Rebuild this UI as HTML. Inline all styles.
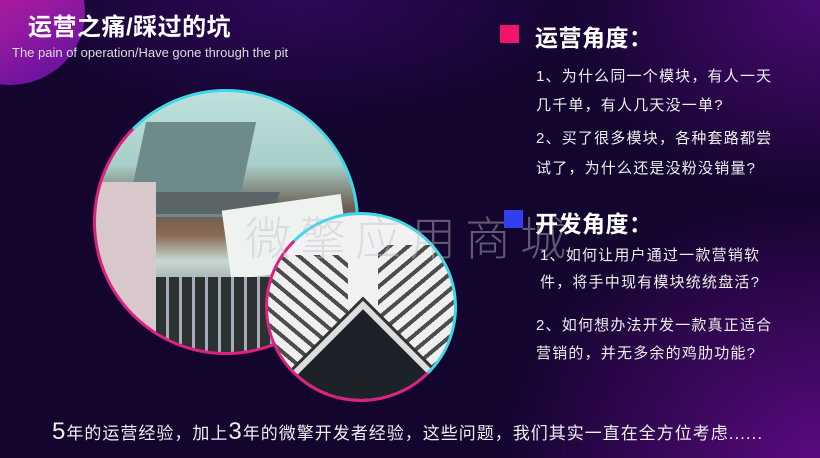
<!DOCTYPE html>
<html><head><meta charset="utf-8"><style>
*{margin:0;padding:0;box-sizing:border-box}
body{width:820px;height:458px;overflow:hidden;position:relative;font-family:"Liberation Sans","Noto Sans CJK SC",sans-serif;color:#fff;
background:radial-gradient(ellipse 260px 200px at 820px 0,#4a0a72 0%,rgba(74,10,114,0) 100%),radial-gradient(ellipse 320px 260px at 820px 458px,#5a0a80 0%,rgba(90,10,128,0) 100%),radial-gradient(ellipse 300px 120px at 300px 0,#2e0858 0%,rgba(46,8,88,0) 100%),#14052f;}
.a{position:absolute;white-space:nowrap}
.blob{position:absolute;left:-65px;top:-60px;width:150px;height:145px;border-radius:50%;background:linear-gradient(150deg,#e0187e 0%,#9a1aa0 55%,#5a10a0 100%)}
.c1{position:absolute;left:93px;top:89px;width:266px;height:266px;border-radius:50%;border:3px solid;border-color:#40d8e8 #40d8e8 #e0207e #e0207e;overflow:hidden;
background:linear-gradient(180deg,#bfe0dc 0%,#a8cfc9 28%,#6b5a50 45%,#8a6a55 55%,#c8d8d4 65%,#9aa8a8 75%,#3a4040 100%)}
.c2{position:absolute;left:265px;top:212px;width:192px;height:190px;border-radius:50%;border:3px solid;border-color:#40d8e8 #40d8e8 #e0207e #e0207e;overflow:hidden;
background:#f2f2f4}
.t{font-size:15px;color:#eee;letter-spacing:1.2px}
</style></head><body>
<div class="blob"></div>
<div class="a" style="left:28px;top:7px;font-size:24px;font-weight:bold;letter-spacing:0.5px">运营之痛/踩过的坑</div>
<div class="a" style="left:12px;top:45px;font-size:13px;color:#ddd">The pain of operation/Have gone through the pit</div>

<div class="c1">
 <div style="position:absolute;left:40px;top:30px;width:110px;height:95px;background:#6f8a8a;transform:skewX(-12deg)"></div>
 <div style="position:absolute;left:50px;top:100px;width:130px;height:22px;background:#5b6466;transform:skewX(-20deg)"></div>
 <div style="position:absolute;left:130px;top:110px;width:120px;height:70px;background:#eef3f0;transform:rotate(-8deg)"></div>
 <div style="position:absolute;left:60px;top:185px;width:150px;height:80px;background:repeating-linear-gradient(90deg,#2a3232 0 10px,#aab 10px 13px)"></div>
 <div style="position:absolute;left:0;top:90px;width:60px;height:180px;background:#d8c8cc"></div>
</div>
<div class="c2">
 <div style="position:absolute;left:0;top:40px;width:80px;height:150px;background:repeating-linear-gradient(40deg,#222 0 4px,#eee 4px 12px);opacity:.8"></div>
 <div style="position:absolute;left:110px;top:30px;width:80px;height:150px;background:repeating-linear-gradient(-40deg,#222 0 4px,#eee 4px 12px);opacity:.8"></div>
 <div style="position:absolute;left:45px;top:115px;width:100px;height:100px;background:#1c2228;transform:rotate(45deg);box-shadow:0 0 0 6px #ddd,0 0 0 9px #333"></div>
</div>

<div class="a" style="left:245px;top:203px;font-size:46px;color:rgba(190,190,200,0.45);font-weight:300;letter-spacing:9px">微擎应用商城</div>

<div class="a" style="left:500px;top:25px;width:19px;height:18px;background:#f0146a"></div>
<div class="a" style="left:535px;top:19px;font-size:23px;font-weight:bold;letter-spacing:0.5px">运营角度：</div>
<div class="a t" style="left:536px;top:65px">1、为什么同一个模块，有人一天</div>
<div class="a t" style="left:536px;top:94px">几千单，有人几天没一单?</div>
<div class="a t" style="left:536px;top:127px">2、买了很多模块，各种套路都尝</div>
<div class="a t" style="left:536px;top:157px">试了，为什么还是没粉没销量?</div>

<div class="a" style="left:504px;top:210px;width:19px;height:18px;background:#3040f0"></div>
<div class="a" style="left:535px;top:205px;font-size:23px;font-weight:bold;letter-spacing:0.5px">开发角度：</div>
<div class="a t" style="left:540px;top:244px">1、如何让用户通过一款营销软</div>
<div class="a t" style="left:540px;top:271px">件，将手中现有模块统统盘活?</div>
<div class="a t" style="left:536px;top:314px">2、如何想办法开发一款真正适合</div>
<div class="a t" style="left:536px;top:342px">营销的，并无多余的鸡肋功能?</div>

<div class="a" style="left:52px;top:418px;font-size:17px;color:#eee;letter-spacing:1px"><span style="font-size:24px">5</span>年的运营经验，加上<span style="font-size:24px">3</span>年的微擎开发者经验，这些问题，我们其实一直在全方位考虑......</div>
</body></html>
